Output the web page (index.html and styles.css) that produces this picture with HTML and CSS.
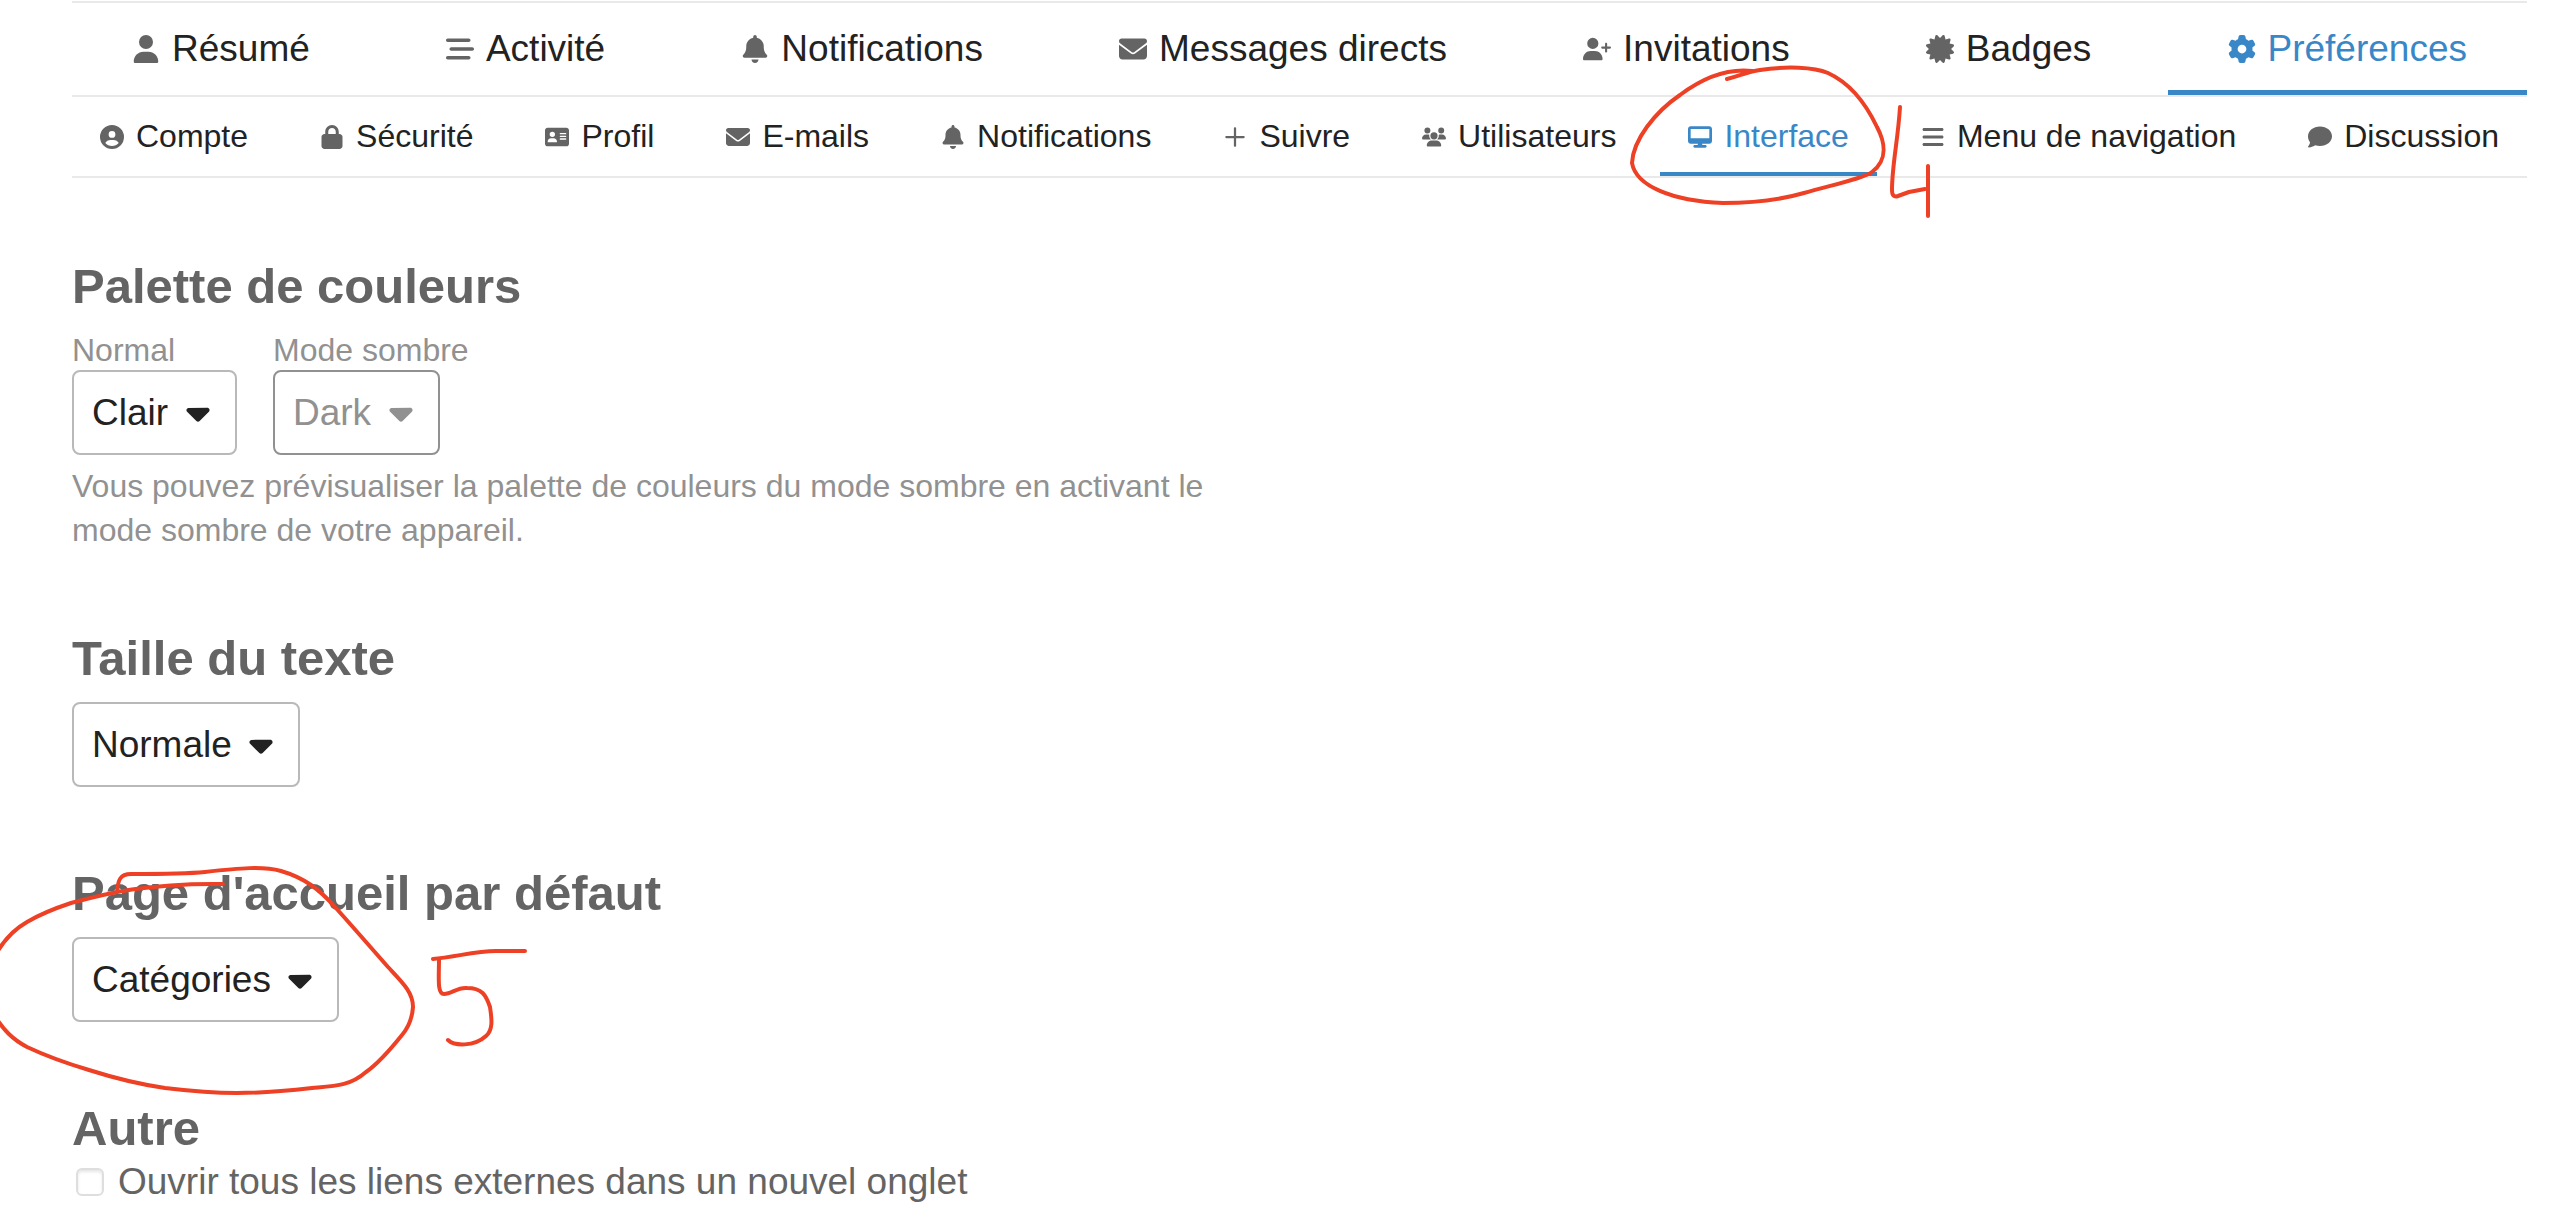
FILE: index.html
```html
<!DOCTYPE html>
<html lang="fr">
<head>
<meta charset="utf-8">
<title>Préférences – Interface</title>
<link rel="stylesheet" href="styles.css">
</head>
<body>
<svg class="sprite" aria-hidden="true">
  <symbol id="user" viewBox="0 0 448 512"><path d="M224 256A128 128 0 1 0 224 0a128 128 0 1 0 0 256zm-45.700 48C79.800 304 0 383.800 0 482.300C0 498.700 13.300 512 29.700 512H418.300c16.400 0 29.700-13.300 29.700-29.700C448 383.800 368.200 304 269.700 304H178.300z"/></symbol>
  <symbol id="stream" viewBox="0 0 512 512"><path d="M0 96C0 78.300 14.300 64 32 64H416c17.700 0 32 14.300 32 32s-14.300 32-32 32H32C14.300 128 0 113.700 0 96zM64 256c0-17.700 14.300-32 32-32H480c17.700 0 32 14.300 32 32s-14.300 32-32 32H96c-17.700 0-32-14.300-32-32zM448 416c0 17.700-14.300 32-32 32H32c-17.700 0-32-14.300-32-32s14.300-32 32-32H416c17.700 0 32 14.300 32 32z"/></symbol>
  <symbol id="bell" viewBox="0 0 448 512"><path d="M224 0c-17.700 0-32 14.300-32 32V51.200C119 66 64 130.600 64 208v18.800c0 47-17.300 92.400-48.500 127.600l-7.400 8.300c-8.400 9.400-10.400 22.900-5.300 34.400S19.400 416 32 416H416c12.600 0 24-7.400 29.200-18.900s3.100-25-5.300-34.400l-7.400-8.300C401.300 319.200 384 273.900 384 226.800V208c0-77.400-55-142-128-156.800V32c0-17.700-14.300-32-32-32zm45.300 493.300c12-12 18.700-28.300 18.700-45.300H160c0 17 6.700 33.300 18.700 45.300s28.300 18.700 45.300 18.700s33.300-6.700 45.300-18.700z"/></symbol>
  <symbol id="envelope" viewBox="0 0 512 512"><path d="M48 64C21.500 64 0 85.500 0 112c0 15.100 7.100 29.300 19.200 38.400L236.800 313.600c11.400 8.500 27 8.500 38.400 0L492.800 150.400c12.100-9.100 19.200-23.300 19.200-38.400c0-26.500-21.500-48-48-48H48zM0 176V384c0 35.300 28.700 64 64 64H448c35.300 0 64-28.700 64-64V176L294.400 339.200c-22.800 17.100-54 17.100-76.800 0L0 176z"/></symbol>
  <symbol id="user-plus" viewBox="0 0 640 512"><path d="M96 128a128 128 0 1 1 256 0A128 128 0 1 1 96 128zM0 482.300C0 383.800 79.800 304 178.300 304h91.400C368.200 304 448 383.800 448 482.300c0 16.400-13.300 29.700-29.700 29.700H29.700C13.300 512 0 498.700 0 482.300zM504 312V248H440c-13.300 0-24-10.700-24-24s10.700-24 24-24h64V136c0-13.300 10.700-24 24-24s24 10.700 24 24v64h64c13.300 0 24 10.700 24 24s-10.700 24-24 24H552v64c0 13.300-10.700 24-24 24s-24-10.700-24-24z"/></symbol>
  <symbol id="certificate" viewBox="0 0 512 512"><path d="M211 7.300C205 1 196-1.400 187.600 .8s-14.900 8.900-17.100 17.300L154.700 80.600l-62-17.500c-8.400-2.400-17.400 0-23.500 6.100s-8.500 15.100-6.100 23.500l17.500 62L18.100 170.600c-8.400 2.100-15 8.700-17.300 17.100S1 205 7.300 211l46.200 45L7.300 301C1 307-1.400 316 .8 324.400s8.900 14.900 17.300 17.100l62.500 15.800-17.500 62c-2.400 8.400 0 17.400 6.100 23.500s15.100 8.500 23.500 6.100l62-17.500 15.800 62.500c2.100 8.400 8.700 15 17.100 17.300s17.300-.2 23.400-6.400l45-46.200 45 46.200c6.100 6.200 15 8.700 23.400 6.400s14.900-8.900 17.100-17.300l15.800-62.500 62 17.500c8.400 2.400 17.400 0 23.500-6.100s8.500-15.100 6.100-23.500l-17.500-62 62.500-15.800c8.400-2.100 15-8.700 17.300-17.100s-.2-17.400-6.400-23.400l-46.200-45 46.200-45c6.200-6.100 8.700-15 6.400-23.400s-8.900-14.900-17.300-17.100l-62.500-15.800 17.500-62c2.400-8.400 0-17.400-6.100-23.500s-15.100-8.500-23.500-6.100l-62 17.500L341.400 18.100c-2.100-8.400-8.700-15-17.100-17.300S307 1 301 7.300L256 53.500 211 7.300z"/></symbol>
  <symbol id="gear" viewBox="0 0 512 512"><path d="M495.900 166.600c3.200 8.700 .5 18.400-6.400 24.600l-43.300 39.400c1.100 8.300 1.700 16.800 1.700 25.400s-.6 17.100-1.700 25.400l43.300 39.400c6.900 6.200 9.600 15.900 6.400 24.600c-4.400 11.900-9.700 23.300-15.800 34.300l-4.700 8.100c-6.600 11-14 21.400-22.100 31.200c-5.900 7.200-15.700 9.600-24.500 6.800l-55.700-17.700c-13.400 10.300-28.200 18.900-44 25.400l-12.500 57.100c-2 9.100-9 16.300-18.200 17.800c-13.800 2.300-28 3.500-42.500 3.500s-28.700-1.200-42.500-3.500c-9.200-1.500-16.200-8.700-18.200-17.800l-12.500-57.100c-15.800-6.500-30.600-15.100-44-25.400L83.100 425.900c-8.800 2.800-18.600 .3-24.500-6.800c-8.100-9.800-15.500-20.200-22.100-31.200l-4.700-8.100c-6.100-11-11.400-22.400-15.800-34.300c-3.200-8.700-.5-18.400 6.400-24.600l43.300-39.400C64.600 273.100 64 264.600 64 256s.6-17.100 1.700-25.400L22.400 191.200c-6.900-6.200-9.600-15.900-6.400-24.600c4.400-11.900 9.700-23.300 15.800-34.300l4.700-8.100c6.600-11 14-21.400 22.100-31.200c5.900-7.200 15.700-9.600 24.500-6.800l55.700 17.700c13.400-10.300 28.200-18.900 44-25.400l12.500-57.100c2-9.100 9-16.300 18.200-17.800C227.300 1.200 241.500 0 256 0s28.700 1.200 42.500 3.500c9.200 1.500 16.200 8.700 18.200 17.800l12.500 57.100c15.800 6.500 30.600 15.100 44 25.400l55.700-17.700c8.800-2.800 18.600-.3 24.500 6.800c8.100 9.800 15.500 20.200 22.100 31.200l4.700 8.100c6.100 11 11.400 22.400 15.800 34.300zM256 336a80 80 0 1 0 0-160 80 80 0 1 0 0 160z"/></symbol>
  <symbol id="circle-user" viewBox="0 0 512 512"><path d="M399 384.200C376.900 345.800 335.400 320 288 320H224c-47.400 0-88.900 25.800-111 64.200c35.200 39.200 86.200 63.800 143 63.800s107.800-24.700 143-63.800zM0 256a256 256 0 1 1 512 0A256 256 0 1 1 0 256zm256 16a72 72 0 1 0 0-144 72 72 0 1 0 0 144z"/></symbol>
  <symbol id="lock" viewBox="0 0 448 512"><path d="M144 144v48H304V144c0-44.200-35.800-80-80-80s-80 35.800-80 80zM80 192V144C80 64.500 144.500 0 224 0s144 64.500 144 144v48h16c35.300 0 64 28.700 64 64V448c0 35.300-28.700 64-64 64H64c-35.300 0-64-28.700-64-64V256c0-35.300 28.700-64 64-64H80z"/></symbol>
  <symbol id="id-card" viewBox="0 0 576 512"><path d="M64 32C28.700 32 0 60.700 0 96V416c0 35.300 28.700 64 64 64H512c35.300 0 64-28.700 64-64V96c0-35.300-28.700-64-64-64H64zm80 256h64c44.200 0 80 35.800 80 80c0 8.800-7.200 16-16 16H80c-8.800 0-16-7.200-16-16c0-44.200 35.800-80 80-80zm-32-96a64 64 0 1 1 128 0 64 64 0 1 1-128 0zm256-32H496c8.800 0 16 7.200 16 16s-7.200 16-16 16H368c-8.800 0-16-7.200-16-16s7.200-16 16-16zm0 64H496c8.800 0 16 7.200 16 16s-7.200 16-16 16H368c-8.800 0-16-7.200-16-16s7.200-16 16-16zm0 64H496c8.800 0 16 7.200 16 16s-7.200 16-16 16H368c-8.800 0-16-7.200-16-16s7.200-16 16-16z"/></symbol>
  <symbol id="plus" viewBox="0 0 448 512"><path d="M248 72c0-13.300-10.700-24-24-24s-24 10.700-24 24V232H40c-13.300 0-24 10.700-24 24s10.700 24 24 24H200V440c0 13.300 10.700 24 24 24s24-10.700 24-24V280H408c13.300 0 24-10.700 24-24s-10.700-24-24-24H248V72z"/></symbol>
  <symbol id="users" viewBox="0 0 640 512"><path d="M144 0a80 80 0 1 1 0 160A80 80 0 1 1 144 0zM512 0a80 80 0 1 1 0 160A80 80 0 1 1 512 0zM0 298.700C0 239.800 47.800 192 106.700 192h42.700c15.900 0 31 3.500 44.600 9.700c-1.300 7.200-1.900 14.700-1.900 22.300c0 38.200 16.800 72.500 43.300 96H21.300C9.600 320 0 310.400 0 298.700zM405.300 320h-.7c26.600-23.500 43.300-57.800 43.300-96c0-7.600-.7-15-1.900-22.300c13.600-6.300 28.700-9.700 44.600-9.700h42.700C592.200 192 640 239.800 640 298.700c0 11.800-9.600 21.300-21.300 21.300H405.300zM224 224a96 96 0 1 1 192 0 96 96 0 1 1-192 0zM128 485.300C128 411.700 187.700 352 261.300 352H378.700C452.300 352 512 411.700 512 485.300c0 14.700-11.900 26.700-26.700 26.700H154.700c-14.700 0-26.700-11.900-26.700-26.700z"/></symbol>
  <symbol id="desktop" viewBox="0 0 576 512"><path d="M64 0C28.700 0 0 28.700 0 64V352c0 35.300 28.700 64 64 64H240l-10.700 32H160c-17.700 0-32 14.300-32 32s14.300 32 32 32H416c17.700 0 32-14.300 32-32s-14.300-32-32-32H346.700L336 416H512c35.300 0 64-28.700 64-64V64c0-35.300-28.700-64-64-64H64zM512 64V288H64V64H512z"/></symbol>
  <symbol id="bars" viewBox="0 0 448 512"><path d="M0 96C0 78.300 14.300 64 32 64H416c17.700 0 32 14.300 32 32s-14.300 32-32 32H32C14.300 128 0 113.700 0 96zM0 256c0-17.700 14.300-32 32-32H416c17.700 0 32 14.300 32 32s-14.300 32-32 32H32c-17.700 0-32-14.300-32-32zM448 416c0 17.700-14.300 32-32 32H32c-17.700 0-32-14.300-32-32s14.300-32 32-32H416c17.700 0 32 14.300 32 32z"/></symbol>
  <symbol id="comment" viewBox="0 0 512 512"><path d="M512 240c0 114.900-114.600 208-256 208c-37.100 0-72.300-6.400-104.100-17.900c-11.900 8.700-31.300 20.600-54.300 30.600C73.600 471.100 44.700 480 16 480c-6.500 0-12.300-3.900-14.800-9.900c-2.500-6-1.100-12.800 3.400-17.400c.1-.1 .3-.3 .5-.5c1.100-1.200 2.700-3 4.600-5.400c3.700-4.600 8.700-11.500 13.800-20c9.100-15.100 17.800-34.900 19.500-57.100C16 332 0 288 0 240C0 125.100 114.600 32 256 32s256 93.100 256 208z"/></symbol>
  <symbol id="caret" viewBox="0 0 320 512"><path d="M137.400 374.600c12.500 12.500 32.800 12.500 45.300 0l128-128c9.200-9.200 11.900-22.900 6.900-34.900s-16.600-19.800-29.600-19.800L32 192c-12.900 0-24.600 7.800-29.600 19.800s-2.200 25.700 6.900 34.900l128 128z"/></symbol>
</svg>

<div class="page">
  <nav class="tabs primary" aria-label="Profil">
    <a href="#resume"><svg class="icon"><use href="#user"/></svg>Résumé</a>
    <a href="#activite"><svg class="icon"><use href="#stream"/></svg>Activité</a>
    <a href="#notifications"><svg class="icon"><use href="#bell"/></svg>Notifications</a>
    <a href="#messages"><svg class="icon"><use href="#envelope"/></svg>Messages directs</a>
    <a href="#invitations"><svg class="icon"><use href="#user-plus"/></svg>Invitations</a>
    <a href="#badges"><svg class="icon"><use href="#certificate"/></svg>Badges</a>
    <a href="#preferences" class="active"><svg class="icon"><use href="#gear"/></svg>Préférences</a>
  </nav>
  <nav class="tabs secondary" aria-label="Préférences">
    <a href="#compte"><svg class="icon"><use href="#circle-user"/></svg>Compte</a>
    <a href="#securite"><svg class="icon"><use href="#lock"/></svg>Sécurité</a>
    <a href="#profil"><svg class="icon"><use href="#id-card"/></svg>Profil</a>
    <a href="#emails"><svg class="icon"><use href="#envelope"/></svg>E-mails</a>
    <a href="#pref-notifications"><svg class="icon"><use href="#bell"/></svg>Notifications</a>
    <a href="#suivre"><svg class="icon"><use href="#plus"/></svg>Suivre</a>
    <a href="#utilisateurs"><svg class="icon"><use href="#users"/></svg>Utilisateurs</a>
    <a href="#interface" class="active"><svg class="icon"><use href="#desktop"/></svg>Interface</a>
    <a href="#menu"><svg class="icon"><use href="#bars"/></svg>Menu de navigation</a>
    <a href="#discussion"><svg class="icon"><use href="#comment"/></svg>Discussion</a>
  </nav>

  <main class="settings">
    <section class="group">
      <h2>Palette de couleurs</h2>
      <div class="palettes">
        <div class="field">
          <label for="light">Normal</label>
          <span class="dropdown"><select id="light"><option>Clair</option></select><svg class="caret"><use href="#caret"/></svg></span>
        </div>
        <div class="field">
          <label for="dark">Mode sombre</label>
          <span class="dropdown muted"><select id="dark"><option>Dark</option></select><svg class="caret"><use href="#caret"/></svg></span>
        </div>
      </div>
      <p class="hint">Vous pouvez prévisualiser la palette de couleurs du mode sombre en activant le mode sombre de votre appareil.</p>
    </section>
    <section class="group">
      <h2 id="size-title">Taille du texte</h2>
      <span class="dropdown"><select aria-labelledby="size-title"><option>Normale</option></select><svg class="caret"><use href="#caret"/></svg></span>
    </section>
    <section class="group">
      <h2 id="home-title">Page d'accueil par défaut</h2>
      <span class="dropdown"><select aria-labelledby="home-title"><option>Catégories</option></select><svg class="caret"><use href="#caret"/></svg></span>
    </section>
    <section class="group">
      <h2>Autre</h2>
      <label class="check"><input type="checkbox">Ouvrir tous les liens externes dans un nouvel onglet</label>
    </section>
  </main>
</div>

<svg class="marks" viewBox="0 0 2568 1222" aria-hidden="true">
  <path d="M1727 79C1740 76 1746 72 1760 70C1786 66 1814 67 1828 73C1852 84 1867 106 1877 127C1885 142 1888 160 1872 172C1864 178 1840 183 1804 193C1780 200 1750 203 1723 203C1672 201 1636 186 1632 163C1633 140 1655 112 1680 95C1700 80 1725 68 1752 71"/>
  <path d="M1900 107C1898 140 1892 165 1892 190Q1892 198 1898 196L1909 192L1925 189M1928 166V216"/>
  <path d="M117 892C118 880 120 874 131 874C160 874 185 874 205 872C240 868 263 866 281 871C305 878 320 890 335 907C354 928 372 949 388 967C402 982 413 992 413 1007C412 1020 408 1028 402 1035C390 1050 379 1063 366 1072C350 1086 335 1086 312 1088C285 1091 262 1093 237 1093C208 1093 190 1091 165 1088C138 1084 114 1078 89 1070C62 1062 44 1055 27 1047C12 1039 4 1030 -4 1018M-4 954C4 940 13 930 27 922C42 913 56 908 71 903C105 894 145 883 223 884"/>
  <path d="M433 959C455 957 476 951 496 951H525M439 959C439 978 437 994 444 994C452 994 457 987 467 988C482 988 486 995 490 1007C492 1020 493 1030 486 1036C474 1047 454 1046 448 1040"/>
</svg>
</body>
</html>
```

FILE: styles.css
```css
* { box-sizing: border-box; }

:root {
  --text: #222;
  --icon: #646464;
  --muted: #919191;
  --line: #e9e9e9;
  --accent: #3a87c8;
}

body {
  position: relative;
  margin: 0;
  background: #fff;
  color: var(--text);
  font-family: "Liberation Sans", Arial, sans-serif;
  font-size: 37px;
  overflow-x: hidden;
}

.sprite { display: none; }

.page { padding: 1px 41px 0 72px; }

.tabs {
  display: flex;
  justify-content: space-between;
  border-bottom: 2px solid var(--line);
}

.tabs a {
  display: flex;
  align-items: center;
  gap: 12px;
  color: inherit;
  text-decoration: none;
  white-space: nowrap;
}

.icon { fill: var(--icon); flex: none; }

.primary { border-top: 2px solid var(--line); }
.primary a {
  height: 92px;
  padding: 0 60px;
  border-top: 5px solid transparent;
  border-bottom: 5px solid transparent;
}
.primary .icon { width: 28px; height: 28px; }

.secondary { font-size: 32px; }
.secondary a {
  height: 79px;
  padding: 0 28px;
  border-top: 4px solid transparent;
  border-bottom: 4px solid transparent;
}
.secondary .icon { width: 24px; height: 24px; }

.tabs .active { color: var(--accent); border-bottom-color: var(--accent); }
.tabs .active .icon { fill: var(--accent); }

.settings {
  display: flex;
  flex-direction: column;
  gap: 78px;
  padding: 80px 0 13px;
}

h2 {
  margin: 0 0 16px;
  color: var(--icon);
  font-size: 49px;
  line-height: 56px;
}

.palettes { display: flex; gap: 36px; }

.field { display: grid; justify-items: start; }
.field:first-child { width: 165px; }

.field label {
  color: var(--muted);
  font-size: 32px;
  line-height: 40px;
}

.dropdown { display: inline-grid; align-items: center; vertical-align: top; }
.dropdown > * { grid-area: 1 / 1; }

.dropdown select {
  appearance: none;
  height: 85px;
  margin: 0;
  padding: 0 66px 0 18px;
  border: 2px solid #b9b9b9;
  border-radius: 8px;
  background: #fff;
  color: var(--text);
  font: inherit;
}

.caret {
  justify-self: end;
  width: 24px;
  height: 37px;
  margin-right: 27px;
  fill: var(--text);
  pointer-events: none;
}

.muted select { color: var(--muted); border-color: var(--muted); }
.muted .caret { fill: var(--muted); }

.hint {
  max-width: 1170px;
  margin: 9px 0 0;
  color: var(--muted);
  font-size: 32px;
  line-height: 44px;
}

.group:last-child h2 { margin: 0; }

.check {
  display: flex;
  align-items: center;
  gap: 14px;
  padding-left: 4px;
  color: var(--icon);
  line-height: 52px;
}

.check input {
  appearance: none;
  width: 28px;
  height: 28px;
  margin: 0;
  border: 2px solid #dedede;
  border-radius: 6px;
  background: #fff;
  box-shadow: inset 0 2px 3px #e6e6e6;
}

.marks {
  position: absolute;
  top: 0;
  left: 0;
  width: 100%;
  fill: none;
  stroke: #ed4024;
  stroke-width: 4;
  stroke-linecap: round;
  stroke-linejoin: round;
  pointer-events: none;
}
```
